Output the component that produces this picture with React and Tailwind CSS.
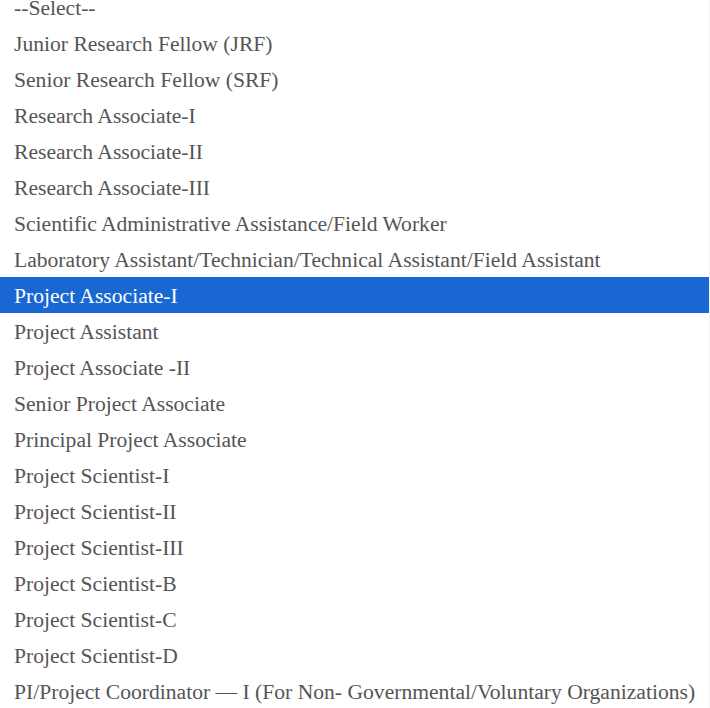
const options = [
  "--Select--",
  "Junior Research Fellow (JRF)",
  "Senior Research Fellow (SRF)",
  "Research Associate-I",
  "Research Associate-II",
  "Research Associate-III",
  "Scientific Administrative Assistance/Field Worker",
  "Laboratory Assistant/Technician/Technical Assistant/Field Assistant",
  "Project Associate-I",
  "Project Assistant",
  "Project Associate -II",
  "Senior Project Associate",
  "Principal Project Associate",
  "Project Scientist-I",
  "Project Scientist-II",
  "Project Scientist-III",
  "Project Scientist-B",
  "Project Scientist-C",
  "Project Scientist-D",
  "PI/Project Coordinator — I (For Non- Governmental/Voluntary Organizations)",
];

export default function App() {
  const selected = 8;
  return (
    <div className="h-[708px] w-[710px] overflow-hidden bg-white flex">
      <ul className="flex-1 -mt-[11px] font-['Liberation_Serif',serif] text-[21.6px] text-[#555]">
        {options.map((label, i) => (
          <li
            key={label}
            className={`h-9 px-[14px] pt-[3px] flex items-center whitespace-nowrap ${
              i === selected ? "bg-[#1967d2] text-white" : ""
            }`}
          >
            {label}
          </li>
        ))}
      </ul>
      <div className="w-[3px] bg-[#f4f4f4]" />
    </div>
  );
}
